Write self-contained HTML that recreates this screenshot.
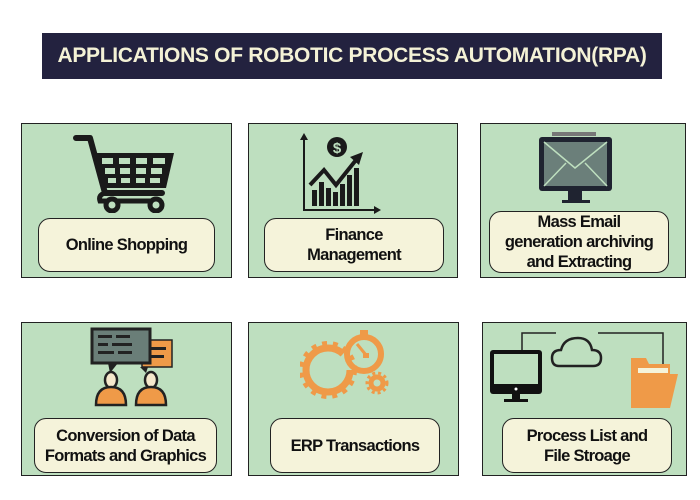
<!DOCTYPE html>
<html><head><style>
body{margin:0;width:700px;height:500px;background:#fff;position:relative;overflow:hidden;font-family:"Liberation Sans",sans-serif}
.banner{position:absolute;left:42px;top:33px;width:620px;height:46px;background:#23223f;color:#f4f2d6;font-weight:bold;font-size:21px;line-height:46px;text-align:center;letter-spacing:-0.3px}
.box{position:absolute;background:#bedfbf;border:1.5px solid #222;box-sizing:border-box}
.lab{position:absolute;background:#f5f3da;border:1.5px solid #222;border-radius:12px;box-sizing:border-box;display:flex;align-items:center;justify-content:center;text-align:center;font-weight:bold;font-size:16.5px;line-height:20px;color:#111;letter-spacing:-0.7px}
svg{position:absolute}
</style></head><body>
<div class="banner">APPLICATIONS OF ROBOTIC PROCESS AUTOMATION(RPA)</div>

<div class="box" style="left:21px;top:123px;width:211px;height:155px"></div>
<div class="box" style="left:248px;top:123px;width:210px;height:155px"></div>
<div class="box" style="left:480px;top:123px;width:206px;height:155px"></div>
<div class="box" style="left:21px;top:322px;width:211px;height:154px"></div>
<div class="box" style="left:248px;top:322px;width:211px;height:154px"></div>
<div class="box" style="left:482px;top:322px;width:205px;height:154px"></div>

<div class="lab" style="left:38px;top:218px;width:177px;height:54px">Online Shopping</div>
<div class="lab" style="left:264px;top:218px;width:180px;height:54px">Finance<br>Management</div>
<div class="lab" style="left:489px;top:211px;width:180px;height:62px">Mass Email<br>generation archiving<br>and Extracting</div>
<div class="lab" style="left:34px;top:418px;width:183px;height:55px">Conversion of Data<br>Formats and Graphics</div>
<div class="lab" style="left:270px;top:418px;width:170px;height:55px">ERP Transactions</div>
<div class="lab" style="left:502px;top:418px;width:170px;height:55px">Process List and<br>File Stroage</div>

<!-- cart -->
<svg style="left:70px;top:133px" width="115" height="80" viewBox="0 0 115 80">
<path d="M6 5H20L35 60H92" fill="none" stroke="#1a1a1a" stroke-width="6" stroke-linejoin="round" stroke-linecap="round"/>
<path d="M24 20H104L96 55H34Z" fill="#1a1a1a"/>
<g fill="#bedfbf"><rect x="32" y="25" width="11" height="6"/><rect x="49" y="25" width="11" height="6"/><rect x="66" y="25" width="11" height="6"/><rect x="83" y="25" width="12" height="6"/>
<rect x="35" y="35" width="10" height="6"/><rect x="50" y="35" width="10" height="6"/><rect x="66" y="35" width="10" height="6"/><rect x="81" y="35" width="11" height="6"/>
<rect x="38" y="45" width="8" height="5"/><rect x="51" y="45" width="9" height="5"/><rect x="66" y="45" width="9" height="5"/><rect x="80" y="45" width="10" height="5"/></g>
<path d="M35 60Q28 62 30 68H92" fill="none" stroke="#1a1a1a" stroke-width="5"/>
<circle cx="42" cy="72" r="6" fill="#bedfbf" stroke="#1a1a1a" stroke-width="5"/>
<circle cx="86" cy="72" r="6" fill="#bedfbf" stroke="#1a1a1a" stroke-width="5"/>
</svg>

<!-- finance -->
<svg style="left:298px;top:130px" width="85" height="85" viewBox="0 0 85 85">
<path d="M6 6V80H80" fill="none" stroke="#1a1a1a" stroke-width="2"/>
<path d="M2 10L6 3L10 10Z M76 76L83 80L76 84Z" fill="#1a1a1a"/>
<circle cx="39" cy="17" r="10" fill="#1a1a1a"/>
<text x="39" y="23" font-size="15" font-weight="bold" fill="#bedfbf" text-anchor="middle" font-family="Liberation Sans">$</text>
<g fill="#1a1a1a"><rect x="14" y="60" width="5" height="16"/><rect x="21" y="52" width="5" height="24"/><rect x="28" y="58" width="5" height="18"/><rect x="35" y="62" width="5" height="14"/><rect x="42" y="54" width="5" height="22"/><rect x="49" y="45" width="5" height="31"/><rect x="56" y="38" width="5" height="38"/></g>
<path d="M12 55L26 40L38 55L58 30" fill="none" stroke="#1a1a1a" stroke-width="4"/>
<path d="M52 27L65 22L61 35Z" fill="#1a1a1a"/>
</svg>

<!-- email monitor -->
<svg style="left:536px;top:130px" width="80" height="75" viewBox="0 0 80 75">
<rect x="16" y="2" width="44" height="4" fill="#777"/>
<rect x="3" y="7" width="73" height="54" rx="3" fill="#1f2330"/>
<rect x="8" y="12" width="63" height="44" fill="#6b7f7a"/>
<path d="M8 12L39 38L71 12M8 56L30 33M71 56L49 33" fill="none" stroke="#bedfbf" stroke-width="1.5"/>
<rect x="32" y="61" width="14" height="9" fill="#1f2330"/>
<rect x="26" y="70" width="28" height="3" fill="#1f2330"/>
</svg>

<!-- chat & people -->
<svg style="left:88px;top:325px" width="90" height="85" viewBox="0 0 90 85">
<rect x="54" y="15" width="30" height="27" fill="#ef9a48" stroke="#222" stroke-width="1.5"/>
<rect x="4" y="4" width="58" height="34" fill="#6a7e78" stroke="#222" stroke-width="3"/>
<path d="M20 38L22 48L30 38Z" fill="#222"/>
<g fill="#222"><rect x="10" y="10" width="14" height="3"/><rect x="28" y="10" width="14" height="3"/><rect x="10" y="18" width="10" height="3"/><rect x="24" y="18" width="20" height="3"/><rect x="10" y="26" width="16" height="3"/><rect x="30" y="26" width="14" height="3"/><rect x="62" y="22" width="16" height="3"/><rect x="62" y="30" width="14" height="3"/></g>
<path d="M60 42L58 48L52 42Z" fill="#222"/>
<ellipse cx="23" cy="55" rx="6" ry="8" fill="#f5e8cc" stroke="#222" stroke-width="2.5"/>
<path d="M8 80Q8 62 23 62Q38 62 38 80Z" fill="#ef9a48" stroke="#222" stroke-width="2.5"/>
<ellipse cx="63" cy="55" rx="6" ry="8" fill="#f5e8cc" stroke="#222" stroke-width="2.5"/>
<path d="M48 80Q48 62 63 62Q78 62 78 80Z" fill="#ef9a48" stroke="#222" stroke-width="2.5"/>
</svg>

<!-- gears -->
<svg style="left:300px;top:328px" width="95" height="75" viewBox="0 0 95 75">
<g fill="none" stroke="#ef9a48">
<circle cx="28" cy="42" r="22" stroke-width="7" stroke-dasharray="120 30"/>
<circle cx="28" cy="42" r="27" stroke-width="4" stroke-dasharray="5 6"/>
<circle cx="64" cy="26" r="17" stroke-width="6"/>
<circle cx="77" cy="55" r="6" stroke-width="5"/>
<circle cx="77" cy="55" r="10" stroke-width="3" stroke-dasharray="3 3"/>
</g>
<rect x="60" y="2" width="8" height="6" fill="#ef9a48"/>
<path d="M57 16L66 27" stroke="#ef9a48" stroke-width="3"/>
<rect x="63" y="25" width="6" height="5" fill="#ef9a48"/>
</svg>

<!-- process -->
<svg style="left:486px;top:328px" width="200" height="80" viewBox="0 0 200 80">
<path d="M36 22V5H70M112 5H177V46" fill="none" stroke="#222" stroke-width="1.5"/>
<path d="M73 38Q66 38 66 30Q66 22 75 22Q78 10 92 10Q104 10 106 22Q115 22 115 30Q115 38 107 38Z" fill="none" stroke="#222" stroke-width="2.5"/>
<rect x="4" y="22" width="52" height="44" rx="3" fill="#111"/>
<rect x="8" y="26" width="44" height="30" fill="#bedfbf"/>
<circle cx="30" cy="61" r="1.5" fill="#fff"/>
<rect x="26" y="66" width="8" height="5" fill="#111"/><rect x="18" y="71" width="24" height="3" fill="#111"/>
<path d="M145 30H160L163 36H184V80H145Z" fill="#ef9a48"/>
<rect x="152" y="40" width="30" height="5" fill="#f5f3da"/>
<path d="M150 46H192L184 80H145Z" fill="#ef9a48"/>
</svg>
</body></html>
